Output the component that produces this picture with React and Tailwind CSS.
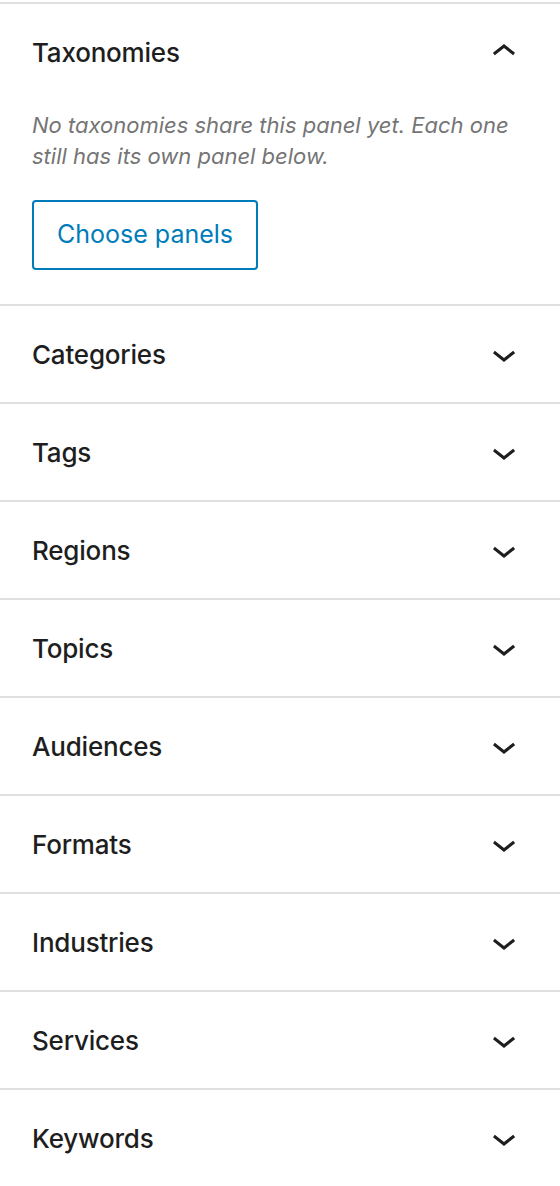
import React from "react";

const font = { fontFamily: "Inter, 'Noto Sans', sans-serif" };

function ChevronDown() {
  return (
    <svg width="48" height="48" viewBox="0 0 24 24" fill="#1e1e1e" aria-hidden="true">
      <path d="M17.5 11.6L12 16l-5.5-4.4.9-1.2L12 14l4.6-3.6 1 1.2z" />
    </svg>
  );
}

function ChevronUp() {
  return (
    <svg width="48" height="48" viewBox="0 0 24 24" fill="#1e1e1e" aria-hidden="true">
      <path d="M6.5 12.4L12 8l5.5 4.4-.9 1.2L12 10l-4.6 3.6-1-1.2z" />
    </svg>
  );
}

function PanelHeader({ title, open }) {
  return (
    <button className="flex h-[96px] w-full items-center justify-between pl-[32px] pr-[32px] text-left">
      <span className="text-[26px] font-medium text-[#1e1e1e] tracking-[-0.2px]">{title}</span>
      {open ? <ChevronUp /> : <ChevronDown />}
    </button>
  );
}

const panels = [
  "Categories",
  "Tags",
  "Regions",
  "Topics",
  "Audiences",
  "Formats",
  "Industries",
  "Services",
  "Keywords",
];

export default function App() {
  return (
    <div className="w-[560px] min-h-[1186px] bg-white pt-[2px]" style={font}>
      <div className="border-t-2 border-[#e0e0e0]">
        <section className="border-b-2 border-[#e0e0e0]">
          <PanelHeader title="Taxonomies" open />
          <div className="px-[32px] pt-[10px] pb-[34px]">
            <p className="whitespace-nowrap text-[22px] italic leading-[31px] text-[#757575]">
              No taxonomies share this panel yet. Each one
              <br />
              still has its own panel below.
            </p>
            <button className="mt-[28px] h-[70px] rounded-[4px] border-2 border-[#007cba] px-[23px] text-[25px] text-[#007cba]">
              Choose panels
            </button>
          </div>
        </section>
        {panels.map((p, i) => (
          <section
            key={p}
            className={i < panels.length - 1 ? "border-b-2 border-[#e0e0e0]" : ""}
          >
            <PanelHeader title={p} />
          </section>
        ))}
      </div>
    </div>
  );
}
